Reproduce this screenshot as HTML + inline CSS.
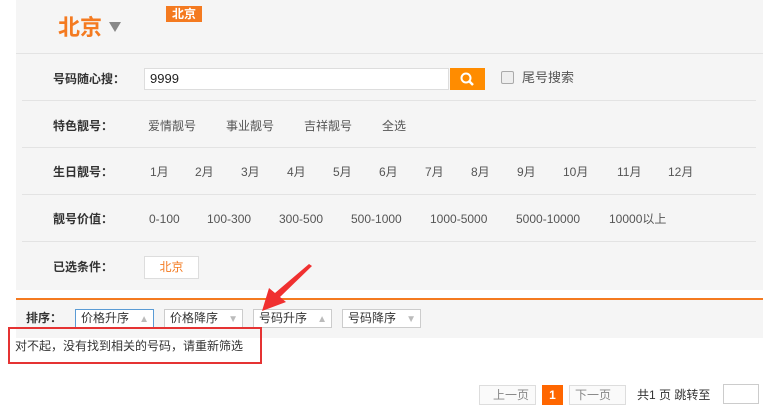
<!DOCTYPE html><html><head><meta charset="utf-8"><style>
body{margin:0;width:763px;height:412px;background:#fff;font-family:"Liberation Sans","Noto Sans CJK SC",sans-serif;font-size:12px;color:#333;position:relative;overflow:hidden}
.a{position:absolute;white-space:nowrap;line-height:16px}
.panel{position:absolute;left:16px;top:0;width:747px;height:290px;background:#f5f5f5}
.hl{position:absolute;height:1px;background:#e3e3e3}
.lab{font-weight:bold;color:#333;font-size:12px;font-family:"Noto Sans CJK SC",sans-serif}
.opt{color:#555;font-size:12px}
.sb{position:absolute;top:309px;height:19px;border:1px solid #ccc;background:#fff;font-size:12px;line-height:17px;padding-left:5px;box-sizing:border-box}
.sb i{position:absolute;right:4px;top:1px;color:#bbb;font-style:normal;font-size:10px}
</style></head><body>
<div class="panel"></div>
<div class="a" style="left:58px;top:16px;font-size:22px;line-height:24px;font-weight:bold;color:#f47a20">北京</div>
<div class="a" style="left:109px;top:22px;width:0;height:0;border-left:6px solid transparent;border-right:6px solid transparent;border-top:10px solid #888"></div>
<div class="a" style="left:166px;top:6px;width:36px;height:16px;background:#f47a20;color:#fff;font-weight:bold;font-size:12px;line-height:16px;text-align:center">北京</div>
<div class="hl" style="left:16px;top:53px;width:747px"></div>
<div class="a lab" style="left:53px;top:71px">号码随心搜：</div>
<div class="a" style="left:144px;top:68px;width:305px;height:22px;background:#fff;border:1px solid #ddd;box-sizing:border-box;font-size:13px;line-height:20px;padding-left:5px;color:#222">9999</div>
<div class="a" style="left:450px;top:68px;width:35px;height:22px;background:#ff8c00"><svg width="35" height="22"><circle cx="16" cy="10" r="4.5" stroke="#fff" stroke-width="2" fill="none"/><line x1="19.5" y1="13.5" x2="23" y2="17" stroke="#fff" stroke-width="2.5"/></svg></div>
<div class="a" style="left:501px;top:71px;width:11px;height:11px;border:1px solid #aaa;border-radius:2px;background:#eee"></div>
<div class="a opt" style="left:522px;top:70px;font-size:13px">尾号搜索</div>
<div class="hl" style="left:22px;top:100px;width:734px"></div>
<div class="a lab" style="left:53px;top:118px">特色靓号：</div>
<div class="a opt" style="left:148px;top:118px">爱情靓号</div><div class="a opt" style="left:226px;top:118px">事业靓号</div><div class="a opt" style="left:304px;top:118px">吉祥靓号</div><div class="a opt" style="left:382px;top:118px">全选</div>
<div class="hl" style="left:22px;top:147px;width:734px"></div>
<div class="a lab" style="left:53px;top:164px">生日靓号：</div>
<div class="a opt" style="left:150px;top:164px">1月</div><div class="a opt" style="left:195px;top:164px">2月</div><div class="a opt" style="left:241px;top:164px">3月</div><div class="a opt" style="left:287px;top:164px">4月</div><div class="a opt" style="left:333px;top:164px">5月</div><div class="a opt" style="left:379px;top:164px">6月</div><div class="a opt" style="left:425px;top:164px">7月</div><div class="a opt" style="left:471px;top:164px">8月</div><div class="a opt" style="left:517px;top:164px">9月</div><div class="a opt" style="left:563px;top:164px">10月</div><div class="a opt" style="left:617px;top:164px">11月</div><div class="a opt" style="left:668px;top:164px">12月</div>
<div class="hl" style="left:22px;top:194px;width:734px"></div>
<div class="a lab" style="left:53px;top:211px">靓号价值：</div>
<div class="a opt" style="left:149px;top:211px">0-100</div><div class="a opt" style="left:207px;top:211px">100-300</div><div class="a opt" style="left:279px;top:211px">300-500</div><div class="a opt" style="left:351px;top:211px">500-1000</div><div class="a opt" style="left:430px;top:211px">1000-5000</div><div class="a opt" style="left:516px;top:211px">5000-10000</div><div class="a opt" style="left:609px;top:211px">10000以上</div>
<div class="hl" style="left:22px;top:241px;width:734px"></div>
<div class="a lab" style="left:53px;top:259px">已选条件：</div>
<div class="a" style="left:144px;top:256px;width:55px;height:23px;background:#fff;border:1px solid #ddd;box-sizing:border-box;text-align:center;line-height:21px;color:#f47a20">北京</div>
<div class="a" style="left:16px;top:298px;width:747px;height:2px;background:#f47a20"></div>
<div class="a" style="left:16px;top:300px;width:747px;height:38px;background:#f5f5f5"></div>
<div class="a lab" style="left:26px;top:310px">排序：</div>
<div class="sb" style="left:75px;width:79px;border-color:#5a9bd5">价格升序<i>▲</i></div>
<div class="sb" style="left:164px;width:79px">价格降序<i>▼</i></div>
<div class="sb" style="left:253px;width:79px">号码升序<i>▲</i></div>
<div class="sb" style="left:342px;width:79px">号码降序<i>▼</i></div>
<div class="a" style="left:15px;top:338px;font-size:12px;color:#333">对不起，没有找到相关的号码，请重新筛选</div>
<div class="a" style="left:8px;top:327px;width:254px;height:37px;border:2px solid #e53333;box-sizing:border-box"></div>
<svg class="a" style="left:0;top:0" width="763" height="412"><polygon points="312,266 280,297 286,302 262,311 269,288 275,293 309,264" fill="#f03030"/></svg>
<div class="a" style="left:479px;top:385px;width:57px;height:20px;border:1px solid #ddd;box-sizing:border-box;color:#888;font-size:12px;line-height:18px;padding-left:13px;background:#fafafa">上一页</div>
<div class="a" style="left:542px;top:385px;width:21px;height:20px;background:#ff6600;color:#fff;font-weight:bold;text-align:center;line-height:20px">1</div>
<div class="a" style="left:569px;top:385px;width:57px;height:20px;border:1px solid #ddd;box-sizing:border-box;color:#888;font-size:12px;line-height:18px;padding-left:5px;background:#fafafa">下一页</div>
<div class="a" style="left:637px;top:387px;color:#333">共1 页 跳转至</div>
<div class="a" style="left:723px;top:384px;width:36px;height:20px;border:1px solid #ccc;box-sizing:border-box;background:#fff"></div>
</body></html>
